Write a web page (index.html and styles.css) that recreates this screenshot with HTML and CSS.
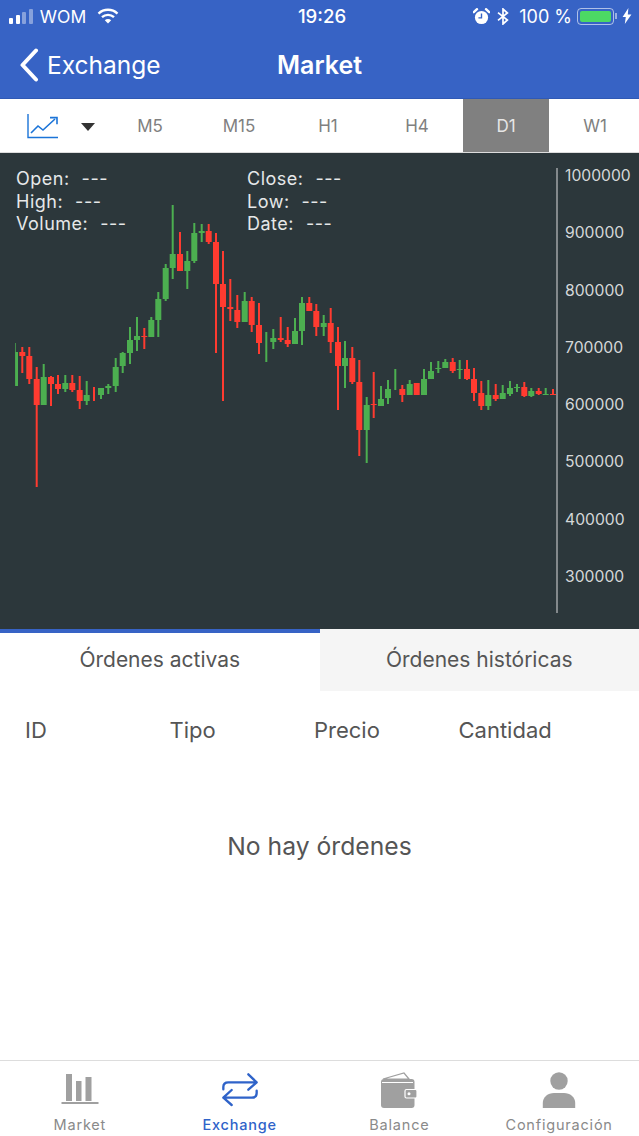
FILE: index.html
```html
<!DOCTYPE html>
<html lang="en">
<head>
  <meta charset="UTF-8">
  <title>Market</title>
  <link rel="stylesheet" href="styles.css">
</head>
<body>
  <header class="header">
    <div class="status-bar">
      <div class="status-left">
        <div class="signal">
          <span class="bar bar-1"></span>
          <span class="bar bar-2"></span>
          <span class="bar bar-3 dim"></span>
          <span class="bar bar-4 dim"></span>
        </div>
        <span class="carrier">WOM</span>
        <svg class="wifi" width="22" height="16" viewBox="0 0 22 16">
          <path d="M1.5 5.6a13.8 13.8 0 0 1 19 0M5 9.2a8.8 8.8 0 0 1 12 0" fill="none" stroke="#fff" stroke-width="2.4"/>
          <path d="M7.8 12.2a4.6 4.6 0 0 1 6.4 0L11 15.6z" fill="#fff"/>
        </svg>
      </div>
      <span class="clock">19:26</span>
      <div class="status-right">
        <svg width="17" height="17" viewBox="0 0 17 17">
          <circle cx="8.5" cy="9.5" r="6.6" fill="#fff"/>
          <path d="M8.5 5.5v4.4H5.4" fill="none" stroke="#3763c5" stroke-width="1.4"/>
          <path d="M.8 4.2 4 1.2M16.2 4.2 13 1.2" stroke="#fff" stroke-width="2.4" stroke-linecap="round"/>
        </svg>
        <svg class="bt" width="12" height="17" viewBox="0 0 12 17">
          <path d="M1 4.6 10.4 12 6 16V1l4.4 4L1 12.4" fill="none" stroke="#fff" stroke-width="1.7"/>
        </svg>
        <span class="percent">100 %</span>
        <div class="battery"><span class="battery-fill"></span></div>
        <span class="battery-tip"></span>
        <svg class="bolt" width="10" height="16" viewBox="0 0 10 16">
          <path d="M6.4 0 .6 9h3.2L2.8 16 9.4 6.4H5.8z" fill="#fff"/>
        </svg>
      </div>
    </div>
    <nav class="nav-bar">
      <a class="back">
        <svg width="20" height="34" viewBox="0 0 20 34">
          <path d="M17 2.5 3.5 17 17 31.5" fill="none" stroke="#fff" stroke-width="4" stroke-linecap="round" stroke-linejoin="round"/>
        </svg>
        <span>Exchange</span>
      </a>
      <h1>Market</h1>
    </nav>
  </header>

  <div class="toolbar">
    <div class="chart-type">
      <svg width="32" height="26" viewBox="0 0 32 26">
        <path d="M1 1v23.5h30" fill="none" stroke="#1b74d8" stroke-width="1.4"/>
        <path d="M4 20l7-7 5 4 12-11" fill="none" stroke="#1b74d8" stroke-width="1.6"/>
        <path d="M23 4.6h7v6.6" fill="none" stroke="#1b74d8" stroke-width="1.6"/>
      </svg>
      <span class="caret"></span>
    </div>
    <div class="periods">
      <span class="period">M5</span>
      <span class="period">M15</span>
      <span class="period">H1</span>
      <span class="period">H4</span>
      <span class="period active">D1</span>
      <span class="period">W1</span>
    </div>
  </div>

  <section class="chart">
    <svg class="plot" width="639" height="476" viewBox="0 153 639 476">
      <defs>
        <clipPath id="plot-area"><rect x="15.3" y="153" width="541" height="476"/></clipPath>
      </defs>
      <g id="candles" clip-path="url(#plot-area)"></g>
      <line x1="557" y1="168" x2="557" y2="613" stroke="#a9adaf" stroke-width="1.4"/>
    </svg>
    <div class="ohlc">
      <div>Open:<span>---</span></div>
      <div>Close:<span>---</span></div>
      <div>High:<span>---</span></div>
      <div>Low:<span>---</span></div>
      <div>Volume:<span>---</span></div>
      <div>Date:<span>---</span></div>
    </div>
    <div class="axis">
      <span>1000000</span>
      <span>900000</span>
      <span>800000</span>
      <span>700000</span>
      <span>600000</span>
      <span>500000</span>
      <span>400000</span>
      <span>300000</span>
    </div>
  </section>

  <div class="order-tabs">
    <div class="order-tab active">Órdenes activas</div>
    <div class="order-tab">Órdenes históricas</div>
  </div>

  <main class="orders">
    <div class="orders-head">
      <span>ID</span>
      <span>Tipo</span>
      <span>Precio</span>
      <span>Cantidad</span>
    </div>
    <p class="empty">No hay órdenes</p>
  </main>

  <footer class="tab-bar">
    <a class="tab">
      <svg width="38" height="36" viewBox="0 0 38 36">
        <path d="M5 2h6v27H5zM15 9h5.500v20H15zM24.500 5H30.500v24h-6z" fill="#a0a0a0"/>
        <path d="M0.500 30h37v2h-37z" fill="#a0a0a0"/>
      </svg>
      <span>Market</span>
    </a>
    <a class="tab active">
      <svg width="40" height="36" viewBox="0 0 120 108">
        <path d="M10 52V45Q10 31 25 31H108M85 7l25 24-25 22M110 56v7Q110 77 95 77H12M35 54 10 77l25 22" fill="none" stroke="#2f63c9" stroke-width="7" stroke-linecap="round" stroke-linejoin="round"/>
      </svg>
      <span>Exchange</span>
    </a>
    <a class="tab">
      <svg width="38" height="36" viewBox="0 0 38 36">
        <path d="M3 7 24 1l5 6z" fill="none" stroke="#a0a0a0" stroke-width="1.2"/>
        <rect x="1" y="7" width="33.500" height="29" rx="3" fill="#a0a0a0"/>
        <path d="M2 10.500h31" stroke="#fff" stroke-width="1"/>
        <rect x="25" y="17.500" width="12" height="8.500" rx="1.500" fill="#a0a0a0" stroke="#fff" stroke-width="1.200"/>
        <circle cx="29" cy="21.700" r="1.500" fill="#fff"/>
      </svg>
      <span>Balance</span>
    </a>
    <a class="tab">
      <svg width="34" height="36" viewBox="0 0 34 36">
        <circle cx="17" cy="9" r="8.700" fill="#a0a0a0"/>
        <path d="M.8 36v-5C.8 25 6 21 12 21h10c6 0 11.200 4 11.200 10v5z" fill="#a0a0a0"/>
      </svg>
      <span>Configuración</span>
    </a>
  </footer>

  <script src="chart.js"></script>
</body>
</html>
```

FILE: styles.css
```css
/* General */
* {
  box-sizing: border-box;
}

body {
  margin: 0;
  width: 639px;
  height: 1136px;
  display: flex;
  flex-direction: column;
  overflow: hidden;
  font-family: Inter, "Liberation Sans", Arial, sans-serif;
  background-color: #fff;
  color: #555;
}

/* Header */
.header {
  height: 99px;
  background-color: #3763c5;
  color: white;
  border-bottom: 1px solid #2f59b5;
}

.status-bar {
  height: 32px;
  padding: 0 7px 0 9px;
  display: flex;
  justify-content: space-between;
  align-items: center;
  position: relative;
}

.status-left,
.status-right {
  display: flex;
  align-items: center;
}

.signal {
  display: flex;
  align-items: flex-end;
  gap: 2.600px;
  height: 15px;
}

.bar {
  width: 4px;
  background-color: white;
  border-radius: 1px;
}

.bar.dim {
  background-color: rgba(255,255,255,0.4);
}

.bar-1 { height: 6px; }
.bar-2 { height: 9px; }
.bar-3 { height: 12px; }
.bar-4 { height: 15px; }

.carrier {
  margin-left: 7px;
  font-size: 17.500px;
}

.wifi {
  margin-left: 11px;
}

.clock {
  position: absolute;
  left: 0;
  right: -5px;
  text-align: center;
  font-size: 18.600px;
  font-weight: 500;
}

.bt {
  margin-left: 7px;
}

.percent {
  margin-left: 10px;
  font-size: 18px;
}

.battery {
  width: 37px;
  height: 17px;
  margin-left: 5px;
  padding: 2px;
  border: 1px solid rgba(255,255,255,0.6);
  border-radius: 4px;
}

.battery-fill {
  display: block;
  height: 100%;
  background-color: #4cd964;
  border-radius: 2px;
}

.battery-tip {
  width: 2px;
  height: 6px;
  margin-left: 1px;
  background-color: rgba(255,255,255,0.5);
}

.bolt {
  margin-left: 5px;
}

.nav-bar {
  height: 66px;
  display: flex;
  align-items: center;
  position: relative;
}

.back {
  display: flex;
  align-items: center;
  gap: 8px;
  margin-left: 19px;
  font-size: 24.500px;
}

.nav-bar h1 {
  position: absolute;
  left: 0;
  right: 0;
  margin: 0;
  text-align: center;
  font-size: 25px;
  font-weight: 600;
}

/* Period selector */
.toolbar {
  height: 54px;
  display: flex;
  flex-shrink: 0;
  border-bottom: 1px solid #ddd;
}

.chart-type {
  width: 107px;
  padding-left: 27px;
  display: flex;
  align-items: center;
}

.caret {
  width: 0;
  height: 0;
  margin-left: 22px;
  margin-top: 2px;
  border-left: 7.500px solid transparent;
  border-right: 7.500px solid transparent;
  border-top: 8px solid #333;
}

.periods {
  display: flex;
  gap: 3px;
}

.period {
  width: 86px;
  display: flex;
  justify-content: center;
  align-items: center;
  font-size: 17px;
  color: #808080;
}

.period.active {
  background-color: #808080;
  color: #e6e6e6;
}

/* Chart */
.chart {
  height: 476px;
  flex-shrink: 0;
  position: relative;
  background-color: #2c373b;
}

.plot {
  display: block;
}

.ohlc {
  position: absolute;
  top: 15px;
  left: 16px;
  display: grid;
  grid-template-columns: 231px 200px;
  font-size: 18px;
  letter-spacing: 0.500px;
  line-height: 22.500px;
  color: #e6e8e9;
}

.ohlc span {
  margin-left: 12px;
}

.axis {
  position: absolute;
  top: 9px;
  left: 565px;
  display: flex;
  flex-direction: column;
  font-size: 15.700px;
  color: #d5d8d9;
}

.axis span {
  height: 57.300px;
  line-height: 28px;
}

/* Order tabs */
.order-tabs {
  display: flex;
  height: 62px;
  flex-shrink: 0;
}

.order-tab {
  flex: 1;
  display: flex;
  justify-content: center;
  align-items: center;
  padding-bottom: 1px;
  font-size: 21px;
  background-color: #f5f5f5;
  color: #555;
}

.order-tab.active {
  background-color: white;
  border-top: 4px solid #3763c5;
  padding-bottom: 6px;
}

.orders {
  flex: 1;
}

.orders-head {
  display: grid;
  grid-template-columns: repeat(4, 144.500px);
  padding: 25px 0 0 25px;
  font-size: 22px;
  line-height: 28px;
}

.empty {
  margin: 86px 0 0;
  text-align: center;
  font-size: 24.700px;
  line-height: 32px;
}

/* Bottom tabs */
.tab-bar {
  height: 76px;
  flex-shrink: 0;
  display: flex;
  border-top: 1px solid #ddd;
  background-color: white;
}

.tab {
  flex: 1;
  height: 100%;
  display: flex;
  flex-direction: column;
  align-items: center;
  justify-content: flex-end;
  padding-bottom: 1px;
  font-size: 14.500px;
  letter-spacing: 0.800px;
  line-height: 20px;
  color: #8a8a8a;
}

.tab svg {
  margin-bottom: 7px;
}

.tab.active {
  color: #2f63c9;
  font-weight: 500;
}
```

FILE: chart.js
```js
// x, high, low, bodyTop, bodyBottom, color
var candles = [
  [15,343,386,352,386,'g'], [22.3,347,373,352,356,'r'], [29.3,347,384,356,379,'r'],
  [36.7,367,487,379,405,'r'], [43.7,364,405,377,405,'g'], [51,376,406,377,384,'r'],
  [58,375,394,384,389,'r'], [65.3,375,392,383,389,'g'], [72.3,375,392,383,390,'r'],
  [79.7,376,409,390,401,'r'], [86.7,381,405,395,401,'g'], [94,387,401,0,0,'r'],
  [101,388,399,388,395,'g'], [108.3,384,394,386,388,'g'], [115.7,358,392,367,386,'g'],
  [122.7,352,373,353,366,'g'], [130,327,364,340,353,'g'], [137,317,351,336,340,'g'],
  [144.3,328,349,336,337,'r'], [151.3,317,337,320,337,'g'], [158.3,292,337,299,320,'g'],
  [165.7,264,301,268,299,'g'], [172.7,205,279,254,268,'g'], [180,232,271,254,271,'r'],
  [187.3,251,289,261,271,'g'], [194.3,223,263,233,261,'g'], [201.7,224,242,231,233,'g'],
  [208.7,224,244,231,242,'r'], [216,233,353,242,284,'r'], [223,251,401,284,307,'r'],
  [230.3,279,321,307,309,'r'], [237.3,295,328,310,322,'r'], [244.7,292,322,301,322,'g'],
  [251.7,297,332,301,325,'r'], [259,303,354,325,343,'r'], [266.3,332,362,0,0,'g'],
  [273.3,329,349,338,342,'g'], [280.7,317,342,338,340,'r'], [287.7,327,347,340,344,'r'],
  [295,318,344,331,344,'g'], [302,297,345,303,331,'g'], [309.3,297,311,303,311,'r'],
  [316.3,304,336,311,327,'r'], [323.7,315,336,323,327,'g'], [330.7,308,353,323,342,'r'],
  [338,327,410,342,366,'r'], [345,341,388,358,366,'g'], [352.3,347,384,358,382,'r'],
  [359.3,360,456,382,430,'r'], [366.7,397,463,405,430,'g'], [373.7,372,418,404,405,'r'],
  [381,386,406,399,406,'g'], [388,380,404,389,398,'g'], [395.3,369,390,0,0,'g'],
  [402.3,385,402,389,395,'r'], [409.7,380,395,384,395,'g'], [416.7,383,395,383,395,'r'],
  [424,369,395,379,395,'g'], [431,362,379,371,379,'g'], [438.3,361,373,368,369,'g'],
  [445.3,359,368,362,368,'g'], [452.7,358,373,362,371,'r'], [459.7,360,379,369,370,'g'],
  [467,360,380,369,379,'r'], [474,368,401,379,393,'r'], [481.3,381,410,393,406,'r'],
  [488.3,380,410,395,406,'g'], [495.7,384,401,395,399,'r'], [502.7,385,399,393,399,'g'],
  [510,381,396,388,394,'g'], [517,384,392,387,388,'g'], [524.3,382,397,387,396,'r'],
  [531.3,388,397,391,396,'g'], [538.7,388,395,391,394,'r'], [545.7,388,395,394,395,'g'],
  [553,389,395,394,395,'r']
];

var colors = { r: '#ff3b30', g: '#4caf50' };
var group = document.getElementById('candles');

function addRect(x, y, w, h, fill) {
  var rect = document.createElementNS('http://www.w3.org/2000/svg', 'rect');
  rect.setAttribute('x', x);
  rect.setAttribute('y', y);
  rect.setAttribute('width', w);
  rect.setAttribute('height', h);
  rect.setAttribute('fill', fill);
  group.appendChild(rect);
}

candles.forEach(function (c) {
  addRect(c[0] - 1, c[1], 2, c[2] - c[1], colors[c[5]]);
  if (c[4] > c[3]) {
    addRect(c[0] - 3, c[3], 6, c[4] - c[3], colors[c[5]]);
  }
});
```
